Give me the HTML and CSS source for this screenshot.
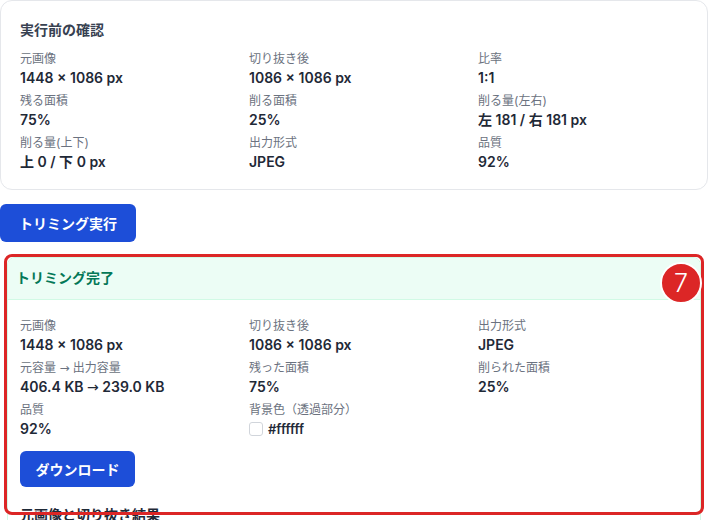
FILE: index.html
```html
<!DOCTYPE html>
<html lang="ja">
<head>
<meta charset="utf-8">
<title>トリミング</title>
<link rel="stylesheet" href="styles.css">
</head>
<body>
<div class="page">
  <section class="card">
    <h2 class="card-title">実行前の確認</h2>
    <div class="grid">
      <div class="item"><div class="label">元画像</div><div class="value">1448 × 1086 px</div></div>
      <div class="item"><div class="label">切り抜き後</div><div class="value">1086 × 1086 px</div></div>
      <div class="item"><div class="label">比率</div><div class="value">1:1</div></div>
      <div class="item"><div class="label">残る面積</div><div class="value">75%</div></div>
      <div class="item"><div class="label">削る面積</div><div class="value">25%</div></div>
      <div class="item"><div class="label">削る量(左右)</div><div class="value">左 181 / 右 181 px</div></div>
      <div class="item"><div class="label">削る量(上下)</div><div class="value">上 0 / 下 0 px</div></div>
      <div class="item"><div class="label">出力形式</div><div class="value">JPEG</div></div>
      <div class="item"><div class="label">品質</div><div class="value">92%</div></div>
    </div>
  </section>

  <button class="btn btn-run">トリミング実行</button>

  <div class="result-wrap">
    <section class="result">
      <div class="result-head">トリミング完了</div>
      <div class="result-body">
        <div class="grid">
          <div class="item"><div class="label">元画像</div><div class="value">1448 × 1086 px</div></div>
          <div class="item"><div class="label">切り抜き後</div><div class="value">1086 × 1086 px</div></div>
          <div class="item"><div class="label">出力形式</div><div class="value">JPEG</div></div>
          <div class="item"><div class="label">元容量 <span class="arrow">→</span> 出力容量</div><div class="value">406.4 KB <span class="arrow">→</span> 239.0 KB</div></div>
          <div class="item"><div class="label">残った面積</div><div class="value">75%</div></div>
          <div class="item"><div class="label">削られた面積</div><div class="value">25%</div></div>
          <div class="item"><div class="label">品質</div><div class="value">92%</div></div>
          <div class="item"><div class="label">背景色（透過部分）</div><div class="value swatch-row"><span class="swatch"></span>#ffffff</div></div>
        </div>
        <button class="btn btn-dl">ダウンロード</button>
        <h3 class="sub-title">元画像と切り抜き結果</h3>
      </div>
    </section>
    <div class="frame"></div>
    <div class="badge">7</div>
  </div>
</div>
</body>
</html>
```

FILE: styles.css
```css
* { box-sizing: border-box; }
html, body { margin: 0; padding: 0; background: #ffffff; }
body {
  font-family: Inter, "Noto Sans CJK JP", sans-serif;
  color: #1f2937;
  overflow: hidden;
  height: 520px;
}
.page { width: 708px; }

.card {
  background: #ffffff;
  border: 1px solid #e5e7eb;
  border-radius: 12px;
  padding: 19px 19px 17px 19px;
}
.card-title {
  margin: 0 0 10px 0;
  font-size: 14px;
  line-height: 20px;
  font-weight: 700;
  color: #374151;
}
.grid {
  display: grid;
  grid-template-columns: 213px 213px 1fr;
  column-gap: 16px;
  row-gap: 4px;
}
.label {
  font-size: 12px;
  line-height: 18px;
  color: #6b7280;
}
.value {
  font-size: 14px;
  line-height: 20px;
  font-weight: 600;
  color: #1f2937;
}
.arrow { font-family: "DejaVu Sans", sans-serif; font-weight: 400; }
.swatch-row { display: flex; align-items: center; gap: 5px; font-size: 13px; }
.swatch {
  width: 14px;
  height: 14px;
  border: 1px solid #d1d5db;
  border-radius: 3px;
  background: #ffffff;
}

.btn {
  display: block;
  border: none;
  background: #1d4ed8;
  color: #ffffff;
  font-family: Inter, "Noto Sans CJK JP", sans-serif;
  font-size: 14px;
  font-weight: 700;
  border-radius: 6px;
  padding: 0;
}
.btn-run {
  margin-top: 14px;
  width: 136px;
  height: 38px;
}

.result-wrap {
  position: relative;
  margin: 15px 7px 0 7px;
}
.result {
  border: 1px solid #d1fae5;
  border-radius: 8px;
  overflow: hidden;
  background: #ffffff;
}
.result-head {
  background: #ecfdf5;
  color: #047857;
  font-size: 14px;
  font-weight: 700;
  line-height: 20px;
  padding: 10px 8px 11px 8px;
  border-bottom: 1px solid #d1fae5;
}
.result-body {
  padding: 17px 12px 12px 12px;
}
.btn-dl {
  margin-top: 12px;
  width: 115px;
  height: 36px;
}
.sub-title {
  margin: 18px 0 0 0;
  font-size: 14px;
  line-height: 20px;
  font-weight: 700;
  color: #1f2937;
}

.frame {
  position: absolute;
  left: -3px;
  right: -3px;
  top: -3px;
  height: 261px;
  border: 3px solid #dc2626;
  border-radius: 8px;
  pointer-events: none;
}
.badge {
  position: absolute;
  right: -1px;
  top: 5px;
  width: 42px;
  height: 42px;
  border-radius: 50%;
  background: #dc2626;
  border: 2px solid #ffffff;
  color: #ffffff;
  font-family: Inter, sans-serif;
  font-size: 25px;
  font-weight: 300;
  line-height: 38px;
  text-align: center;
}
```
